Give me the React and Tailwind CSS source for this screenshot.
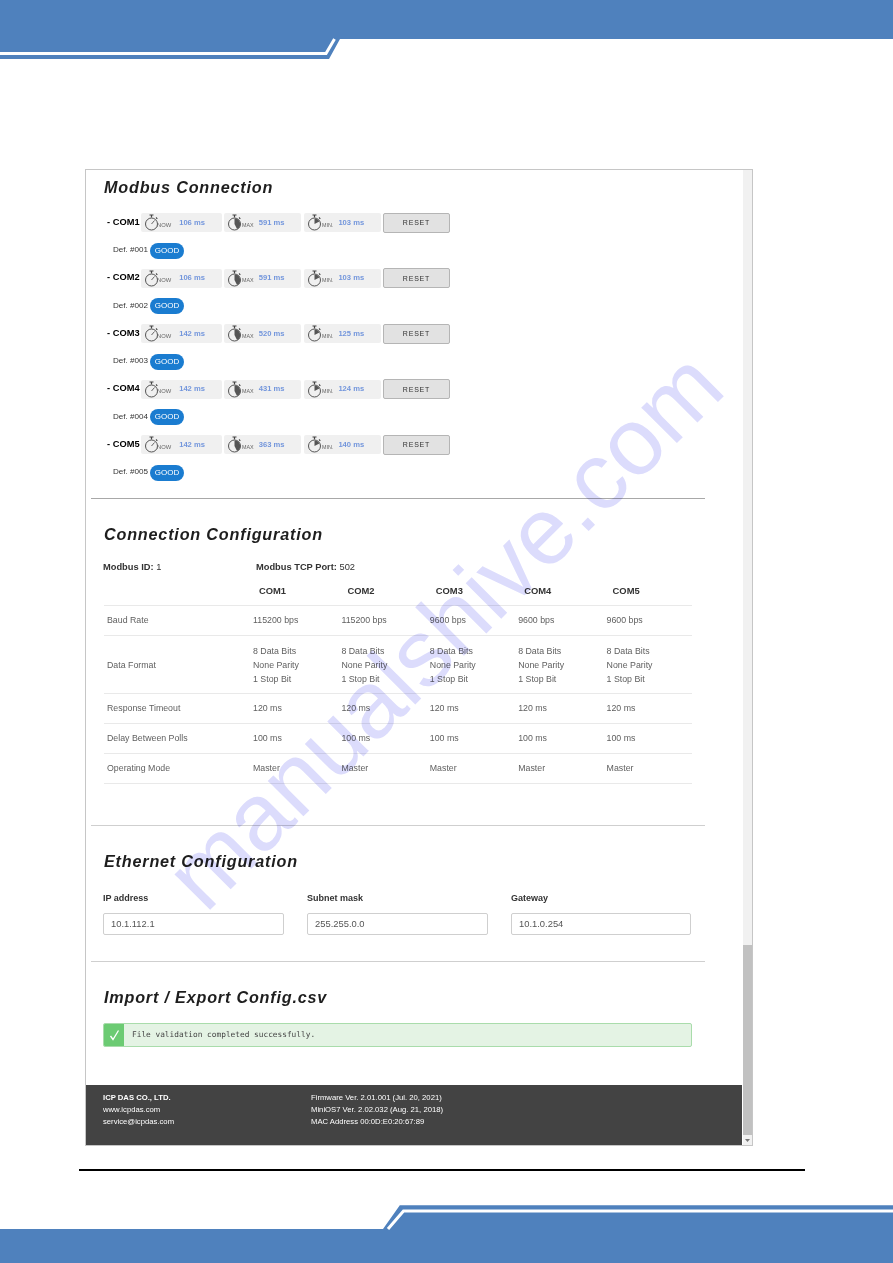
import React from "react";

const COMS = [
  { name: "COM1", def: "Def. #001", now: "106 ms", max: "591 ms", min: "103 ms" },
  { name: "COM2", def: "Def. #002", now: "106 ms", max: "591 ms", min: "103 ms" },
  { name: "COM3", def: "Def. #003", now: "142 ms", max: "520 ms", min: "125 ms" },
  { name: "COM4", def: "Def. #004", now: "142 ms", max: "431 ms", min: "124 ms" },
  { name: "COM5", def: "Def. #005", now: "142 ms", max: "363 ms", min: "140 ms" },
];

function Stopwatch({ kind }) {
  return (
    <svg width="15" height="17" viewBox="0 0 15 17" className="shrink-0">
      <path d="M5.5 1h4M7.5 1v2.5" stroke="#444" strokeWidth="1.2" fill="none" />
      <path d="M12 3.5l1.3 1.3" stroke="#444" strokeWidth="1.1" fill="none" />
      <circle cx="7.5" cy="10" r="6" stroke="#555" strokeWidth="1" fill="none" />
      {kind === "now" && <path d="M7.5 10l3-3.5" stroke="#555" strokeWidth="0.9" fill="none" />}
      {kind === "max" && <path d="M7.5 10V4.5A5.5 5.5 0 0 1 10 15z" fill="#555" />}
      {kind === "min" && <path d="M7.5 10V4.5A5.5 5.5 0 0 1 12.4 7.6z" fill="#555" />}
    </svg>
  );
}

function Stat({ kind, label, value, widthClass, gapClass, labelClass }) {
  return (
    <div className={`flex h-[19px] items-center rounded-[2px] bg-[#f0f0f0] pl-[3px] ${widthClass}`}>
      <Stopwatch kind={kind} />
      <span className={`mt-[6px] leading-none text-[#666] ${labelClass}`}>{label}</span>
      <span className={`text-[7.6px] font-bold leading-none text-[#7396dc] ${gapClass}`}>{value}</span>
    </div>
  );
}

function ComGroup({ com }) {
  return (
    <div className="h-[55.5px]">
      <div className="flex h-[21px] items-center">
        <span className="ml-[3px] w-[34px] whitespace-nowrap text-[9.3px] font-bold leading-none text-black">- {com.name}</span>
        <Stat kind="now" label="NOW" value={com.now} widthClass="w-[81px]" gapClass="ml-[8px]" labelClass="-ml-[2px] text-[5.8px]" />
        <div className="w-[2px]" />
        <Stat kind="max" label="MAX" value={com.max} widthClass="w-[77px]" gapClass="ml-[5px]" labelClass="text-[5.4px]" />
        <div className="w-[3px]" />
        <Stat kind="min" label="MIN." value={com.min} widthClass="w-[77px]" gapClass="ml-[5px]" labelClass="text-[5.4px]" />
        <div className="w-[2px]" />
        <button className="h-[20px] w-[67px] rounded-[2px] border border-[#b5b5b5] bg-[#e2e2e2] text-[7px] leading-none tracking-[0.8px] text-[#333]">
          RESET
        </button>
      </div>
      <div className="mt-[9px] flex h-[17px] items-center pl-[9px]">
        <span className="w-[37px] whitespace-nowrap text-[8.1px] leading-none text-[#333]">{com.def}</span>
        <span className="flex h-[16px] w-[34px] items-center justify-center rounded-full bg-[#1a7cd0] text-[8px] leading-none text-white">
          GOOD
        </span>
      </div>
    </div>
  );
}

function Heading({ children, className = "" }) {
  return (
    <h2 className={`flex h-[24px] items-center pb-[2px] pl-[18px] text-[16.2px] font-bold italic leading-none tracking-[0.8px] text-[#1e1e1e] ${className}`}>
      {children}
    </h2>
  );
}

const ROW_GRID = "grid grid-cols-[146px_repeat(5,88.4px)] items-center border-b border-[#e9e9e9] text-[8.8px] text-[#606060]";

function Row({ label, values, heightClass }) {
  return (
    <div className={`${ROW_GRID} ${heightClass}`}>
      <div className="pl-[3px]">{label}</div>
      {values.map((v, i) => (
        <div key={i} className="pl-[3px]">{v}</div>
      ))}
    </div>
  );
}

function Field({ label, value, widthClass, gapClass }) {
  return (
    <div className={`${widthClass} ${gapClass}`}>
      <div className="flex h-[14px] items-center text-[9px] font-bold leading-none text-[#333]">{label}</div>
      <div className="mt-[8px] flex h-[22px] items-center rounded-[2px] border border-[#cfcfcf] bg-white pl-[7px] text-[9.4px] leading-none text-[#555]">
        {value}
      </div>
    </div>
  );
}

export default function App() {
  const five = (v) => [v, v, v, v, v];
  return (
    <div className="relative flex h-[1263px] w-[893px] flex-col overflow-hidden bg-white font-['Liberation_Sans',Arial,sans-serif]">
      <svg width="893" height="60" viewBox="0 0 893 60" className="block shrink-0">
        <polygon points="0,0 893,0 893,39 340,39 329,59 0,59" fill="#4f81bd" />
        <polyline points="0,53.5 326,53.5 334.5,39" fill="none" stroke="#fff" strokeWidth="3" />
      </svg>

      <div className="ml-[85px] mt-[109px] flex h-[977px] w-[668px] shrink-0 border border-[#c6c6c6]">
        <div className="w-[656px] shrink-0">
          <Heading className="mt-[6px]">Modbus Connection</Heading>
          <div className="mt-[12px] pl-[18px]">
            {COMS.map((c) => (
              <ComGroup key={c.name} com={c} />
            ))}
          </div>

          <div className="ml-[5px] mt-[8.5px] h-px w-[614px] bg-[#a8a8a8]" />

          <Heading className="mt-[24px]">Connection Configuration</Heading>
          <div className="ml-[17px] mt-[13px] flex h-[14px] items-center pt-[2px] text-[9.3px] leading-none text-[#333]">
            <span className="w-[153px]"><b>Modbus ID:</b> 1</span>
            <span><b>Modbus TCP Port:</b> 502</span>
          </div>
          <div className="ml-[18px] w-[588px]">
            <div className={`${ROW_GRID} h-[32px] pt-[3px]`}>
              <div />
              {["COM1", "COM2", "COM3", "COM4", "COM5"].map((c) => (
                <div key={c} className="pl-[9px] text-[9.4px] font-bold text-[#333]">{c}</div>
              ))}
            </div>
            <Row label="Baud Rate" heightClass="h-[30px] pt-px" values={["115200 bps", "115200 bps", "9600 bps", "9600 bps", "9600 bps"]} />
            <Row
              label="Data Format"
              heightClass="h-[58px] leading-[14px]"
              values={five(<>8 Data Bits<br />None Parity<br />1 Stop Bit</>)}
            />
            <Row label="Response Timeout" heightClass="h-[30px] pt-px" values={five("120 ms")} />
            <Row label="Delay Between Polls" heightClass="h-[30px] pt-px" values={five("100 ms")} />
            <Row label="Operating Mode" heightClass="h-[30px] pt-px" values={five("Master")} />
          </div>

          <div className="ml-[5px] mt-[41px] h-px w-[614px] bg-[#cfcfcf]" />

          <Heading className="mt-[24px]">Ethernet Configuration</Heading>
          <div className="ml-[17px] mt-[17px] flex">
            <Field label="IP address" value="10.1.112.1" widthClass="w-[181px]" />
            <Field label="Subnet mask" value="255.255.0.0" widthClass="w-[181px]" gapClass="ml-[23px]" />
            <Field label="Gateway" value="10.1.0.254" widthClass="w-[180px]" gapClass="ml-[23px]" />
          </div>

          <div className="ml-[5px] mt-[26px] h-px w-[614px] bg-[#cfcfcf]" />

          <Heading className="mt-[24px]">Import / Export Config.csv</Heading>
          <div className="ml-[17px] mt-[13px] flex h-[24px] w-[589px] overflow-hidden rounded-[2px] border border-[#a9dcab] bg-[#e4f3e4]">
            <div className="flex w-[20px] items-center justify-center bg-[#6ccb73]">
              <svg width="11" height="12" viewBox="0 0 11 12">
                <path d="M1.5 7l2.5 3.5L9.5 1.5" fill="none" stroke="#fff" strokeWidth="1.3" />
              </svg>
            </div>
            <div className="flex items-center pl-[8px] font-['DejaVu_Sans_Mono',monospace] text-[7.8px] leading-none text-[#444]">
              File validation completed successfully.
            </div>
          </div>

          <div className="mt-[38px] flex h-[60px] bg-[#434343] pl-[17px] pt-[7px] text-[7.7px] leading-[12px] text-white">
            <div className="w-[208px]">
              <div className="font-bold">ICP DAS CO., LTD.</div>
              <div>www.icpdas.com</div>
              <div>service@icpdas.com</div>
            </div>
            <div>
              <div>Firmware Ver. 2.01.001 (Jul. 20, 2021)</div>
              <div>MiniOS7 Ver. 2.02.032 (Aug. 21, 2018)</div>
              <div>MAC Address 00:0D:E0:20:67:89</div>
            </div>
          </div>
        </div>

        <div className="ml-px flex w-[9px] flex-col bg-[#f1f1f1]">
          <div className="h-[775px]" />
          <div className="h-[190px] bg-[#c1c1c1]" />
          <div className="flex h-[10px] items-center justify-center">
            <svg width="5" height="3" viewBox="0 0 5 3"><polygon points="0,0 5,0 2.5,3" fill="#777" /></svg>
          </div>
        </div>
      </div>

      <div className="ml-[79px] mt-[23px] h-[2px] w-[726px] shrink-0 bg-black" />

      <svg width="893" height="58" viewBox="0 0 893 58" className="mt-[34px] block shrink-0">
        <polygon points="0,58 0,24 383,24 400,0 893,0 893,58" fill="#4f81bd" />
        <path d="M400 0.5H893" stroke="#7ba0cd" strokeWidth="1" />
        <polyline points="388,24 403.5,6 893,6" fill="none" stroke="#fff" strokeWidth="3" />
      </svg>

      <div className="pointer-events-none absolute left-[216px] top-[830px] origin-bottom-left -rotate-45 whitespace-nowrap text-[95px] leading-none text-[#dcdcfc] mix-blend-multiply">
        manualshive.com
      </div>
    </div>
  );
}
